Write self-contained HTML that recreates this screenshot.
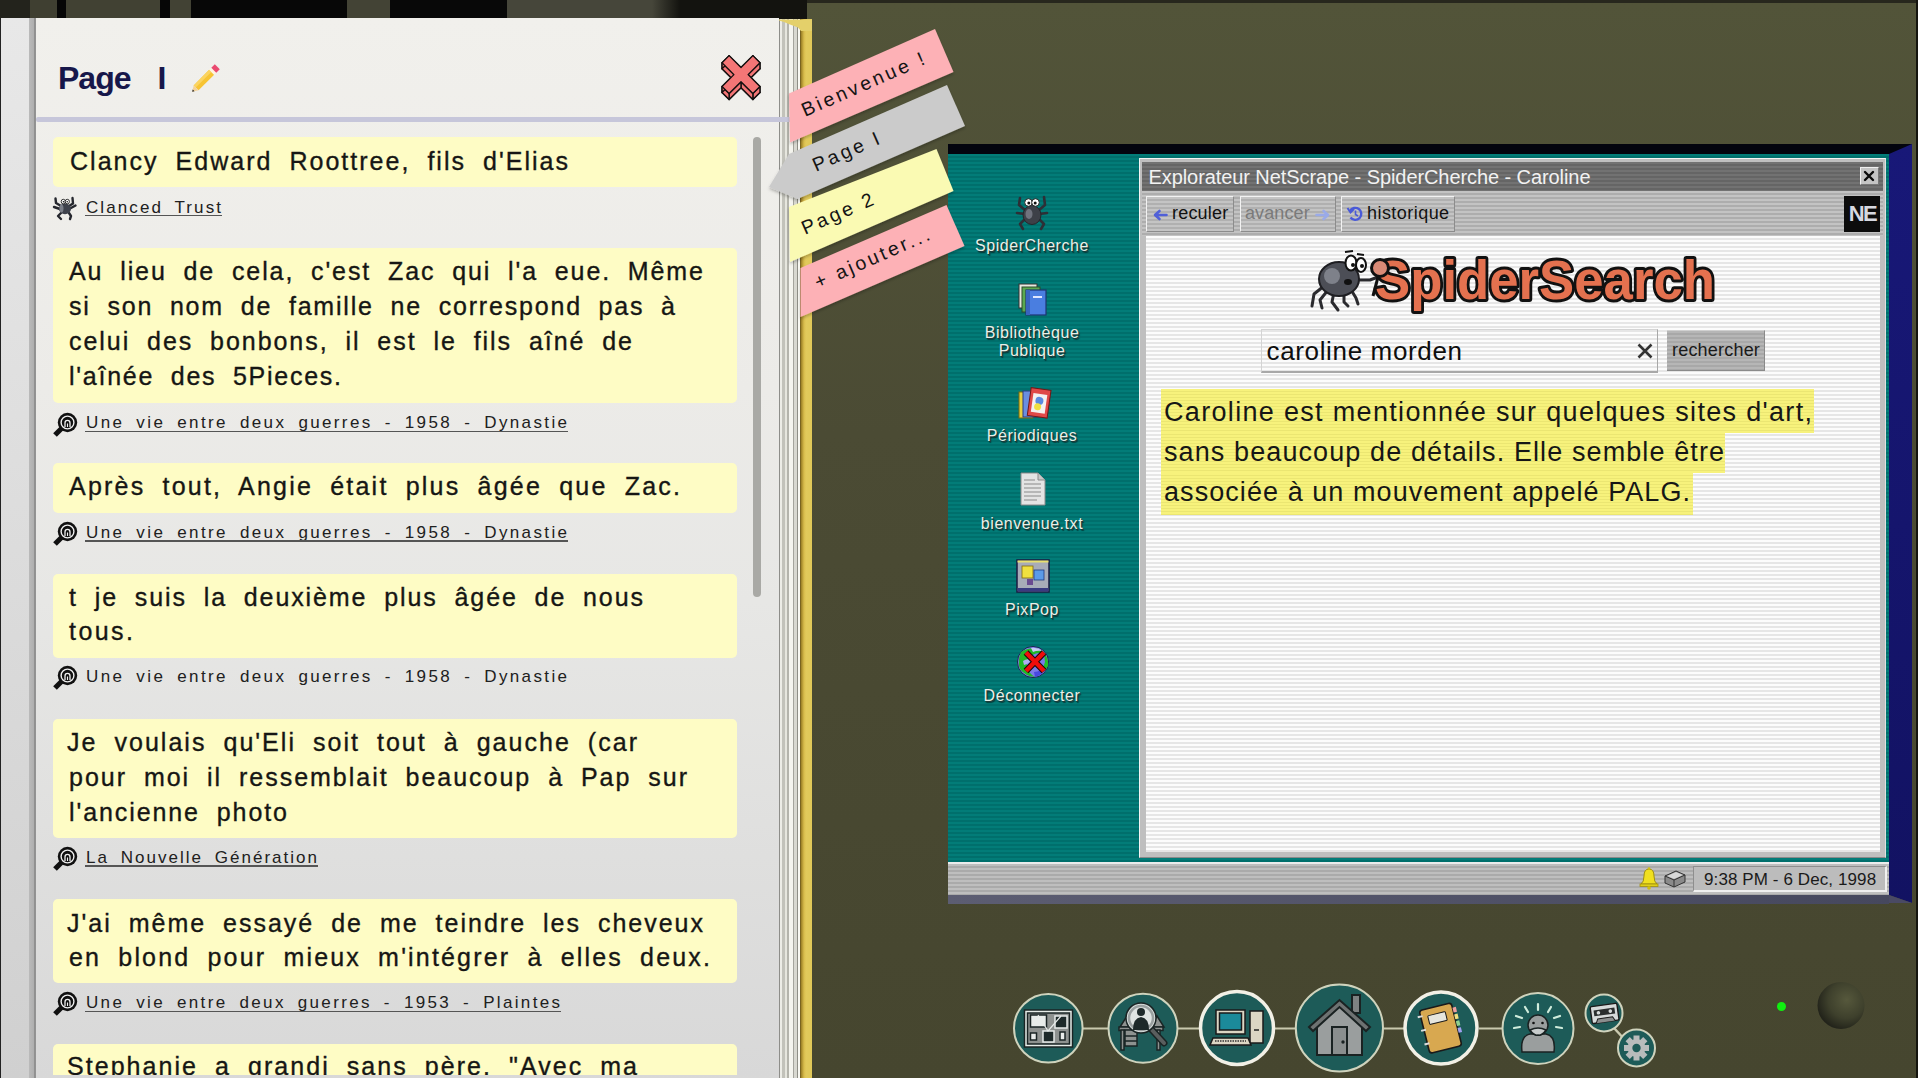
<!DOCTYPE html>
<html><head><meta charset="utf-8"><style>
*{margin:0;padding:0;box-sizing:border-box}
html,body{width:1918px;height:1078px;overflow:hidden}
body{position:relative;background:#4b4b34;font-family:"Liberation Sans",sans-serif}
.abs{position:absolute}
.nw{white-space:pre}
#topband{left:0;top:0;width:807px;height:19px;background:linear-gradient(90deg,#23231c 0 30px,#3f3f31 30px 57px,#060606 57px 66px,#414133 66px 160px,#060606 160px 170px,#424234 170px 191px,#070707 191px 347px,#434335 347px 390px,#080808 390px 507px,#46463a 507px 652px,#2c2c24 666px,#13130f 680px 807px)}
#topright{left:807px;top:0;width:1111px;height:3px;background:#27271d}
#rightedge{left:1916px;top:0;width:2px;height:1078px;background:#15150f}
#bgshade{left:807px;top:3px;width:1109px;height:1075px;background:linear-gradient(#525439,#4b4b34 40%,#46462f)}
#lstrip{left:0;top:18px;width:36px;height:1060px;background:linear-gradient(#e8e8e8,#d0d0d0)}
#lstrip:before{content:"";position:absolute;left:0;top:0;width:1px;height:100%;background:#222}
#lstrip:after{content:"";position:absolute;left:29px;top:0;width:7px;height:100%;background:linear-gradient(90deg,#bababa 0,#b0b0b0 4.5px,#8f8f8f 5px,#949494 7px)}
#page{left:36px;top:18px;width:743px;height:1060px;background:linear-gradient(#f1f0ec 0%,#ecebe8 35%,#e7e7e5 55%,#d8d8d8 100%)}
#edges{left:779px;top:19px;width:22px;height:1059px;background:linear-gradient(90deg,#8e8e8a 0,#8e8e8a 1px,#ececE6 1px,#ececE6 3px,#c2c2ba 3px,#c2c2ba 6px,#e6e6de 6px,#e6e6de 8px,#b4b4ac 8px,#b4b4ac 10px,#f4f4ee 10px,#f4f4ee 14px,#a4a49c 14px,#a4a49c 15.5px,#d8d8d0 15.5px,#d8d8d0 18px,#8e8e86 18px,#8e8e86 19px,#f8f8f2 19px,#f8f8f2 21px,#7a6420 21px)}
#spine{left:801px;top:19px;width:11px;height:1059px;background:linear-gradient(90deg,#9a7e24,#d8bc4c 3px,#e2ca5c 5px,#e0c858 100%)}
#ptitle{font-size:32px;line-height:32px;font-weight:bold;color:#17174a;letter-spacing:-0.99px}
.card{left:53px;width:684px;background:#fefcc5;border-radius:5px}
#clip{left:0;top:0;width:1918px;height:1075px;overflow:hidden}
</style></head><body>
<div id="bgshade" class="abs"></div>
<div id="topband" class="abs"></div>
<div id="topright" class="abs"></div>
<div id="rightedge" class="abs"></div>
<div id="lstrip" class="abs"></div>
<div id="page" class="abs"></div>
<div id="edges" class="abs"></div>
<div id="spine" class="abs"></div>
<svg class="abs" style="left:778px;top:18px" width="36" height="14" viewBox="778 18 36 14"><polygon points="779,19.5 812,19.5 812,31 801,31 798,27.5 790,24.5 784,22 779,20.5" fill="#e4d06a"/></svg>
<div id="clip" class="abs">
<div class="abs nw" id="ptitle" style="left:58px;top:62px;">Page <span style="margin-left:19px">I</span></div>
<svg class="abs" style="left:186px;top:58px" width="40" height="40" viewBox="0 0 40 40">
<g transform="rotate(-45 20 20)">
<rect x="6" y="16.5" width="22" height="7" fill="#f7c433"/>
<rect x="6" y="16.5" width="22" height="3" fill="#fbd460"/>
<rect x="28" y="16.5" width="3" height="7" fill="#fff3e0"/>
<rect x="31" y="16.5" width="5" height="7" fill="#ea4a70"/>
<path d="M6 16.5 L0.5 20 L6 23.5 Z" fill="#f3d29a"/>
<path d="M2.5 18.7 L0.5 20 L2.5 21.3 Z" fill="#222"/>
</g></svg>
<svg class="abs" style="left:700px;top:40px" width="80" height="80" viewBox="700 40 80 80"><g stroke="#141010" stroke-width="1.4" stroke-linejoin="round" fill="#f47676"><polygon points="741.00,73.53 752.88,61.65 759.95,68.72 748.07,80.60 759.95,92.48 752.88,99.55 741.00,87.67 729.12,99.55 722.05,92.48 733.93,80.60 722.05,68.72 729.12,61.65"/><polygon points="741.00,67.53 752.88,55.65 752.88,61.65 741.00,73.53"/><polygon points="752.88,55.65 759.95,62.72 759.95,68.72 752.88,61.65"/><polygon points="759.95,62.72 748.07,74.60 748.07,80.60 759.95,68.72"/><polygon points="748.07,74.60 759.95,86.48 759.95,92.48 748.07,80.60"/><polygon points="759.95,86.48 752.88,93.55 752.88,99.55 759.95,92.48"/><polygon points="752.88,93.55 741.00,81.67 741.00,87.67 752.88,99.55"/><polygon points="741.00,81.67 729.12,93.55 729.12,99.55 741.00,87.67"/><polygon points="729.12,93.55 722.05,86.48 722.05,92.48 729.12,99.55"/><polygon points="722.05,86.48 733.93,74.60 733.93,80.60 722.05,92.48"/><polygon points="733.93,74.60 722.05,62.72 722.05,68.72 733.93,80.60"/><polygon points="722.05,62.72 729.12,55.65 729.12,61.65 722.05,68.72"/><polygon points="729.12,55.65 741.00,67.53 741.00,73.53 729.12,61.65"/><polygon points="741.00,67.53 752.88,55.65 759.95,62.72 748.07,74.60 759.95,86.48 752.88,93.55 741.00,81.67 729.12,93.55 722.05,86.48 733.93,74.60 722.05,62.72 729.12,55.65" stroke-width="1.3"/></g></svg>
<div class="abs" style="left:36px;top:117px;width:765px;height:5px;background:#c6c6da;border-radius:2px"></div>
<div class="abs card" style="top:137px;height:50px"></div>
<div class="abs nw" style="left:70.0px;top:149.2px;font-size:25px;line-height:25px;letter-spacing:2.022px;word-spacing:8px;color:#161614;-webkit-text-stroke:0.35px #161614">Clancy Edward Roottree, fils d'Elias</div>
<div class="abs card" style="top:247.5px;height:155.5px"></div>
<div class="abs nw" style="left:69.0px;top:258.8px;font-size:25px;line-height:25px;letter-spacing:1.892px;word-spacing:8px;color:#161614;-webkit-text-stroke:0.35px #161614">Au lieu de cela, c'est Zac qui l'a eue. Même</div>
<div class="abs nw" style="left:69.0px;top:294.3px;font-size:25px;line-height:25px;letter-spacing:1.807px;word-spacing:8px;color:#161614;-webkit-text-stroke:0.35px #161614">si son nom de famille ne correspond pas à</div>
<div class="abs nw" style="left:69.0px;top:328.8px;font-size:25px;line-height:25px;letter-spacing:1.948px;word-spacing:8px;color:#161614;-webkit-text-stroke:0.35px #161614">celui des bonbons, il est le fils aîné de</div>
<div class="abs nw" style="left:69.0px;top:363.8px;font-size:25px;line-height:25px;letter-spacing:1.738px;word-spacing:8px;color:#161614;-webkit-text-stroke:0.35px #161614">l'aînée des 5Pieces.</div>
<div class="abs card" style="top:463px;height:49.5px"></div>
<div class="abs nw" style="left:69.0px;top:474.4px;font-size:25px;line-height:25px;letter-spacing:2.215px;word-spacing:8px;color:#161614;-webkit-text-stroke:0.35px #161614">Après tout, Angie était plus âgée que Zac.</div>
<div class="abs card" style="top:573.5px;height:84.0px"></div>
<div class="abs nw" style="left:69.0px;top:584.8px;font-size:25px;line-height:25px;letter-spacing:1.900px;word-spacing:8px;color:#161614;-webkit-text-stroke:0.35px #161614">t je suis la deuxième plus âgée de nous</div>
<div class="abs nw" style="left:69.0px;top:619.3px;font-size:25px;line-height:25px;letter-spacing:2.449px;word-spacing:8px;color:#161614;-webkit-text-stroke:0.35px #161614">tous.</div>
<div class="abs card" style="top:718.5px;height:119.0px"></div>
<div class="abs nw" style="left:67.0px;top:730.2px;font-size:25px;line-height:25px;letter-spacing:2.030px;word-spacing:8px;color:#161614;-webkit-text-stroke:0.35px #161614">Je voulais qu'Eli soit tout à gauche (car</div>
<div class="abs nw" style="left:69.0px;top:764.8px;font-size:25px;line-height:25px;letter-spacing:1.980px;word-spacing:8px;color:#161614;-webkit-text-stroke:0.35px #161614">pour moi il ressemblait beaucoup à Pap sur</div>
<div class="abs nw" style="left:69.0px;top:799.8px;font-size:25px;line-height:25px;letter-spacing:1.913px;word-spacing:8px;color:#161614;-webkit-text-stroke:0.35px #161614">l'ancienne photo</div>
<div class="abs card" style="top:898.5px;height:84.5px"></div>
<div class="abs nw" style="left:67.0px;top:910.8px;font-size:25px;line-height:25px;letter-spacing:1.998px;word-spacing:8px;color:#161614;-webkit-text-stroke:0.35px #161614">J'ai même essayé de me teindre les cheveux</div>
<div class="abs nw" style="left:69.0px;top:945.3px;font-size:25px;line-height:25px;letter-spacing:2.182px;word-spacing:8px;color:#161614;-webkit-text-stroke:0.35px #161614">en blond pour mieux m'intégrer à elles deux.</div>
<div class="abs card" style="top:1044px;height:56px"></div>
<div class="abs nw" style="left:67.0px;top:1053.8px;font-size:25px;line-height:25px;letter-spacing:2.049px;word-spacing:8px;color:#161614;-webkit-text-stroke:0.35px #161614">Stephanie a grandi sans père. "Avec ma</div>
<svg class="abs" style="left:52px;top:196px" width="26" height="26" viewBox="0 0 26 26">
<g stroke="#25272e" stroke-width="2.4" fill="none" stroke-linecap="round" stroke-linejoin="round">
<path d="M9 10 L4 7 L3.5 2.5"/><path d="M17 10 L21 7.5 L20.5 2"/>
<path d="M8 13 L2 11"/><path d="M18 12.5 L23.5 9.5"/>
<path d="M9 17 L6 20 L9 23"/><path d="M17 17 L19 20 L18 23"/>
</g>
<ellipse cx="13" cy="12.8" rx="6" ry="5.4" fill="#3e424c"/>
<ellipse cx="9.5" cy="12.5" rx="2" ry="4" fill="#7a7e88"/>
<ellipse cx="11.3" cy="5.6" rx="2.1" ry="2.3" fill="#fff" stroke="#1a1a1a" stroke-width="0.9"/>
<ellipse cx="15.3" cy="5.6" rx="2.1" ry="2.3" fill="#fff" stroke="#1a1a1a" stroke-width="0.9"/>
<circle cx="11.5" cy="5.8" r="0.8" fill="#111"/><circle cx="15.2" cy="5.8" r="0.8" fill="#111"/>
</svg>
<div class="abs nw" style="left:86.0px;top:198.6px;font-size:17px;line-height:17px;letter-spacing:2.092px;word-spacing:5px;color:#202020">Clanced Trust</div>
<div class="abs" style="left:85px;top:214.8px;width:137px;height:1.3px;background:#555"></div>
<svg class="abs" style="left:52px;top:410.5px" width="28" height="28" viewBox="0 0 28 28">
<path d="M10 17 L3 24" stroke="#111" stroke-width="5.2" stroke-linecap="butt"/>
<circle cx="15.5" cy="11.5" r="9.7" fill="#111"/>
<circle cx="15.5" cy="11.5" r="6.4" fill="none" stroke="#f0f0f0" stroke-width="1.4"/>
<path d="M13 16 V12 A2.5 2.6 0 0 1 18 12 V16" fill="none" stroke="#f0f0f0" stroke-width="1.3"/>
<path d="M15.5 16 V12.5" stroke="#f0f0f0" stroke-width="1.1"/>
</svg>
<div class="abs nw" style="left:86.0px;top:414.4px;font-size:17px;line-height:17px;letter-spacing:2.366px;word-spacing:5px;color:#202020">Une vie entre deux guerres - 1958 - Dynastie</div>
<div class="abs" style="left:85px;top:430.8px;width:483px;height:1.3px;background:#555"></div>
<svg class="abs" style="left:52px;top:519.7px" width="28" height="28" viewBox="0 0 28 28">
<path d="M10 17 L3 24" stroke="#111" stroke-width="5.2" stroke-linecap="butt"/>
<circle cx="15.5" cy="11.5" r="9.7" fill="#111"/>
<circle cx="15.5" cy="11.5" r="6.4" fill="none" stroke="#f0f0f0" stroke-width="1.4"/>
<path d="M13 16 V12 A2.5 2.6 0 0 1 18 12 V16" fill="none" stroke="#f0f0f0" stroke-width="1.3"/>
<path d="M15.5 16 V12.5" stroke="#f0f0f0" stroke-width="1.1"/>
</svg>
<div class="abs nw" style="left:86.0px;top:523.6px;font-size:17px;line-height:17px;letter-spacing:2.366px;word-spacing:5px;color:#202020">Une vie entre deux guerres - 1958 - Dynastie</div>
<div class="abs" style="left:85px;top:540.3px;width:483px;height:1.3px;background:#555"></div>
<svg class="abs" style="left:52px;top:663.7px" width="28" height="28" viewBox="0 0 28 28">
<path d="M10 17 L3 24" stroke="#111" stroke-width="5.2" stroke-linecap="butt"/>
<circle cx="15.5" cy="11.5" r="9.7" fill="#111"/>
<circle cx="15.5" cy="11.5" r="6.4" fill="none" stroke="#f0f0f0" stroke-width="1.4"/>
<path d="M13 16 V12 A2.5 2.6 0 0 1 18 12 V16" fill="none" stroke="#f0f0f0" stroke-width="1.3"/>
<path d="M15.5 16 V12.5" stroke="#f0f0f0" stroke-width="1.1"/>
</svg>
<div class="abs nw" style="left:86.0px;top:667.6px;font-size:17px;line-height:17px;letter-spacing:2.366px;word-spacing:5px;color:#202020">Une vie entre deux guerres - 1958 - Dynastie</div>
<svg class="abs" style="left:52px;top:844.7px" width="28" height="28" viewBox="0 0 28 28">
<path d="M10 17 L3 24" stroke="#111" stroke-width="5.2" stroke-linecap="butt"/>
<circle cx="15.5" cy="11.5" r="9.7" fill="#111"/>
<circle cx="15.5" cy="11.5" r="6.4" fill="none" stroke="#f0f0f0" stroke-width="1.4"/>
<path d="M13 16 V12 A2.5 2.6 0 0 1 18 12 V16" fill="none" stroke="#f0f0f0" stroke-width="1.3"/>
<path d="M15.5 16 V12.5" stroke="#f0f0f0" stroke-width="1.1"/>
</svg>
<div class="abs nw" style="left:86.0px;top:848.6px;font-size:17px;line-height:17px;letter-spacing:2.018px;word-spacing:5px;color:#202020">La Nouvelle Génération</div>
<div class="abs" style="left:85px;top:865.3px;width:233px;height:1.3px;background:#555"></div>
<svg class="abs" style="left:52px;top:990.2px" width="28" height="28" viewBox="0 0 28 28">
<path d="M10 17 L3 24" stroke="#111" stroke-width="5.2" stroke-linecap="butt"/>
<circle cx="15.5" cy="11.5" r="9.7" fill="#111"/>
<circle cx="15.5" cy="11.5" r="6.4" fill="none" stroke="#f0f0f0" stroke-width="1.4"/>
<path d="M13 16 V12 A2.5 2.6 0 0 1 18 12 V16" fill="none" stroke="#f0f0f0" stroke-width="1.3"/>
<path d="M15.5 16 V12.5" stroke="#f0f0f0" stroke-width="1.1"/>
</svg>
<div class="abs nw" style="left:86.0px;top:994.1px;font-size:17px;line-height:17px;letter-spacing:2.335px;word-spacing:5px;color:#202020">Une vie entre deux guerres - 1953 - Plaintes</div>
<div class="abs" style="left:85px;top:1010.8px;width:476px;height:1.3px;background:#555"></div>
<div class="abs" style="left:752.5px;top:137px;width:8.5px;height:460px;border-radius:5px;background:#a9a9a5"></div>
</div>
<div class="abs" style="left:948px;top:144px;width:964px;height:10px;background:#03040e"></div>
<div class="abs" style="left:948px;top:154px;width:941px;height:708px;background:repeating-linear-gradient(180deg,#027c78 0px,#027c78 2.5px,#006f6c 2.5px,#006f6c 4px)"></div>
<svg class="abs" style="left:1885px;top:140px" width="30" height="770" viewBox="1885 140 30 770">
<defs><linearGradient id="bl" x1="0" y1="0" x2="0" y2="1"><stop offset="0" stop-color="#181878"/><stop offset="1" stop-color="#121262"/></linearGradient></defs>
<polygon points="1889,154 1912,144 1912,903 1889,895" fill="url(#bl)"/>
<polygon points="1889,895 1912,903 1889,903" fill="#4a4a64"/>
</svg>
<div class="abs" style="left:948px;top:862px;width:941px;height:33px;background:repeating-linear-gradient(180deg,#bebebe 0,#bebebe 2.5px,#aaaaaa 2.5px,#aaaaaa 4px);border-top:2.5px solid #ececec"></div>
<div class="abs" style="left:948px;top:895px;width:941px;height:8.5px;background:linear-gradient(90deg,#5c5d72,#46485e)"></div>
<div class="abs" style="left:1693px;top:866px;width:194px;height:26px;border-top:1.5px solid #8e8e8e;border-left:1.5px solid #8e8e8e;border-bottom:2px solid #f0f0f0;border-right:2px solid #f0f0f0;background:#bcbcbc"></div>
<div class="abs nw" style="left:1704.0px;top:870.6px;font-size:17px;line-height:17px;color:#1a1a1a;letter-spacing:0.1px">9:38 PM - 6 Dec, 1998</div>
<svg class="abs" style="left:1638px;top:866px" width="50" height="24" viewBox="0 0 50 24">
<path d="M3 18 Q6 16 6 10 Q6 3 11 3 Q16 3 16 10 Q16 16 19 18 Z" fill="#f0e020" stroke="#a09010" stroke-width="1"/>
<rect x="2" y="18" width="18" height="2.5" fill="#e0d018" stroke="#a09010" stroke-width="0.8"/>
<circle cx="11" cy="22" r="1.8" fill="#d0c010"/><circle cx="11" cy="2.5" r="1.3" fill="#d0c010"/>
<path d="M27 10 L38 5 L47 9 L47 16 L36 21 L27 17 Z" fill="#8a8a8a" stroke="#333" stroke-width="1"/>
<path d="M27 10 L36 14 L47 9" fill="none" stroke="#333" stroke-width="1"/>
<path d="M36 14 V21" stroke="#333" stroke-width="1"/>
<path d="M29 10 L38 6 L45 9 L36 13 Z" fill="#d8d8d8"/>
</svg>
<svg class="abs" style="left:1014px;top:193px" width="36" height="38" viewBox="0 0 36 38">
<g stroke="#2d2f36" stroke-width="2.6" fill="none" stroke-linecap="round" stroke-linejoin="round">
<path d="M11 17 L5 12 L6 5"/><path d="M25 17 L31 12 L30 4"/>
<path d="M11 21 L3 20"/><path d="M25 21 L33 20"/>
<path d="M12 25 L6 31 L9 36"/><path d="M24 25 L30 31 L27 36"/>
</g>
<ellipse cx="18" cy="22" rx="9" ry="9.5" fill="#3d4048" stroke="#25262b" stroke-width="1"/>
<ellipse cx="15" cy="21" rx="3.5" ry="5" fill="#70737e"/>
<circle cx="14.5" cy="9.5" r="3.8" fill="#fff" stroke="#222" stroke-width="1"/>
<circle cx="21.5" cy="9.5" r="3.8" fill="#fff" stroke="#222" stroke-width="1"/>
<circle cx="14.8" cy="10" r="1.5" fill="#111"/><circle cx="21.2" cy="10" r="1.5" fill="#111"/>
</svg>
<div class="abs nw" style="left:932.0px;width:200px;text-align:center;top:237.5px;font-size:16px;line-height:16px;color:#e8f0ea;letter-spacing:0.55px;text-shadow:1px 1px 0 #1f3a38,1.5px 1.5px 1px rgba(0,0,0,.5);">SpiderCherche</div>
<svg class="abs" style="left:1016px;top:281px" width="34" height="36" viewBox="0 0 34 36">
<rect x="3" y="3" width="18" height="24" fill="#e8e8e0" stroke="#333" stroke-width="1"/>
<rect x="6" y="6" width="18" height="25" fill="#5aa850" stroke="#2a4a28" stroke-width="1"/>
<rect x="10" y="9" width="20" height="25" fill="#4a7ee0" stroke="#1e3470" stroke-width="1.2"/>
<rect x="10" y="9" width="4" height="25" fill="#3a64c0"/>
<rect x="17" y="15" width="9" height="2" fill="#dfe8ff"/>
</svg>
<div class="abs nw" style="left:932.0px;width:200px;text-align:center;top:324.5px;font-size:16px;line-height:16px;color:#e8f0ea;letter-spacing:0.55px;text-shadow:1px 1px 0 #1f3a38,1.5px 1.5px 1px rgba(0,0,0,.5);">Bibliothèque</div>
<div class="abs nw" style="left:932.0px;width:200px;text-align:center;top:342.8px;font-size:16px;line-height:16px;color:#e8f0ea;letter-spacing:0.55px;text-shadow:1px 1px 0 #1f3a38,1.5px 1.5px 1px rgba(0,0,0,.5);">Publique</div>
<svg class="abs" style="left:1016px;top:386px" width="36" height="36" viewBox="0 0 36 36">
<rect x="3" y="6" width="14" height="26" fill="#e8d040" stroke="#7a6a10" stroke-width="1"/>
<rect x="7" y="5" width="14" height="26" fill="#6a8ee0" stroke="#2a3a80" stroke-width="1"/>
<g transform="rotate(8 24 18)"><rect x="13" y="3" width="20" height="28" fill="#e04848" stroke="#701818" stroke-width="1"/>
<rect x="16" y="8" width="14" height="19" fill="#f4f0f0"/>
<circle cx="23" cy="15" r="4" fill="#5a8ae0"/><circle cx="22" cy="21" r="3.5" fill="#f0e040"/></g>
</svg>
<div class="abs nw" style="left:932.0px;width:200px;text-align:center;top:428.3px;font-size:16px;line-height:16px;color:#e8f0ea;letter-spacing:0.55px;text-shadow:1px 1px 0 #1f3a38,1.5px 1.5px 1px rgba(0,0,0,.5);">Périodiques</div>
<svg class="abs" style="left:1019px;top:472px" width="28" height="34" viewBox="0 0 28 34">
<path d="M2 1 H19 L26 8 V33 H2 Z" fill="#e4e4e4" stroke="#8a8a8a" stroke-width="1"/>
<path d="M19 1 V8 H26" fill="#c8c8c8" stroke="#8a8a8a" stroke-width="1"/>
<g stroke="#9a9a9a" stroke-width="1.2"><path d="M5 8 H16"/><path d="M5 12 H22"/><path d="M5 16 H22"/><path d="M5 20 H22"/><path d="M5 24 H22"/><path d="M5 28 H18"/></g>
</svg>
<div class="abs nw" style="left:932.0px;width:200px;text-align:center;top:516.0px;font-size:16px;line-height:16px;color:#e8f0ea;letter-spacing:0.55px;text-shadow:1px 1px 0 #1f3a38,1.5px 1.5px 1px rgba(0,0,0,.5);">bienvenue.txt</div>
<svg class="abs" style="left:1016px;top:559px" width="34" height="34" viewBox="0 0 34 34">
<rect x="1" y="1" width="32" height="32" fill="#a8acb8" stroke="#1a1a40" stroke-width="1.5"/>
<rect x="1.5" y="1.5" width="31" height="2" fill="#e8e070"/>
<rect x="1.5" y="29" width="31" height="3.5" fill="#3a3a80"/>
<rect x="6" y="7" width="11" height="12" fill="#f0e040" stroke="#806a10" stroke-width="0.8"/>
<rect x="18" y="11" width="10" height="10" fill="#5a9ae8" stroke="#1e3a80" stroke-width="0.8"/>
<rect x="11" y="20" width="6" height="6" fill="#6a4a90"/>
</svg>
<div class="abs nw" style="left:932.0px;width:200px;text-align:center;top:602.1px;font-size:16px;line-height:16px;color:#e8f0ea;letter-spacing:0.55px;text-shadow:1px 1px 0 #1f3a38,1.5px 1.5px 1px rgba(0,0,0,.5);">PixPop</div>
<svg class="abs" style="left:1015px;top:644px" width="36" height="36" viewBox="0 0 36 36">
<circle cx="18" cy="18" r="15.6" fill="#7a7ae8" stroke="#1a2a50" stroke-width="1"/>
<path d="M6 8 Q12 4 20 4 Q26 5 30 9 Q22 8 16 12 Q10 16 12 22 Q14 30 20 33 Q10 32 5 25 Q2 18 6 8 Z" fill="#22b828"/>
<path d="M30 10 Q34 16 33 22 Q31 26 28 28 Q28 22 30 18 Q29 14 30 10 Z" fill="#20c028"/>
<path d="M16 4 Q22 3 28 7 Q22 6 18 8 Z" fill="#c8c8f8"/>
<path d="M8 17 Q12 14 16 16 Q14 20 9 21 Z" fill="#b0b0f0"/>
<path d="M19 28 Q26 27 30 24 Q28 31 20 33 Z" fill="#4848e0"/>
<g stroke-linecap="butt"><path d="M11 8.5 L29 27 M29 8.5 L11 27" stroke="#1a0a0a" stroke-width="6.5"/>
<path d="M11 8.5 L29 27 M29 8.5 L11 27" stroke="#f00c0c" stroke-width="4.4"/></g>
</svg>
<div class="abs nw" style="left:932.0px;width:200px;text-align:center;top:687.7px;font-size:16px;line-height:16px;color:#e8f0ea;letter-spacing:0.55px;text-shadow:1px 1px 0 #1f3a38,1.5px 1.5px 1px rgba(0,0,0,.5);">Déconnecter</div>
<div class="abs" style="left:1139px;top:158px;width:747px;height:700px;background:#bfbfbf;border-top:1.5px solid #f4f4f4;border-left:1.5px solid #f4f4f4;border-right:1.5px solid #e0e0e0;border-bottom:1px solid #8a8a8a"></div>
<div class="abs" style="left:1142px;top:162px;width:741px;height:29px;background:repeating-linear-gradient(180deg,#727272 0,#727272 2.5px,#656565 2.5px,#656565 4px)"></div>
<div class="abs nw" style="left:1148.5px;top:167.4px;font-size:20px;line-height:20px;color:#f2f2f2;letter-spacing:-0.08px">Explorateur NetScrape - SpiderCherche - Caroline</div>
<div class="abs" style="left:1860px;top:167px;width:18.5px;height:18px;background:#c4c4c4;border-top:1px solid #f0f0f0;border-left:1px solid #f0f0f0;border-bottom:1px solid #777;border-right:1px solid #777"></div>
<svg class="abs" style="left:1860px;top:167px" width="18" height="18" viewBox="0 0 18 18"><path d="M5 5 L13 13 M13 5 L5 13" stroke="#0a0a0a" stroke-width="2.4" stroke-linecap="round"/></svg>
<div class="abs" style="left:1142px;top:191px;width:741px;height:45px;background:repeating-linear-gradient(180deg,#c3c3c3 0,#c3c3c3 2.5px,#adadad 2.5px,#adadad 4px)"></div>
<div class="abs" style="left:1146px;top:196px;width:88px;height:35.5px;background:repeating-linear-gradient(180deg,#c4c4c4 0,#c4c4c4 2.5px,#b0b0b0 2.5px,#b0b0b0 4px);border-top:1.5px solid #f2f2f2;border-left:1.5px solid #f2f2f2;border-bottom:1.5px solid #8c8c8c;border-right:1.5px solid #8c8c8c;"></div>
<div class="abs" style="left:1240px;top:196px;width:95.5px;height:35.5px;background:repeating-linear-gradient(180deg,#c4c4c4 0,#c4c4c4 2.5px,#b0b0b0 2.5px,#b0b0b0 4px);border-top:1.5px solid #f2f2f2;border-left:1.5px solid #f2f2f2;border-bottom:1.5px solid #8c8c8c;border-right:1.5px solid #8c8c8c;"></div>
<div class="abs" style="left:1341px;top:196px;width:113.5px;height:35.5px;background:repeating-linear-gradient(180deg,#c4c4c4 0,#c4c4c4 2.5px,#b0b0b0 2.5px,#b0b0b0 4px);border-top:1.5px solid #f2f2f2;border-left:1.5px solid #f2f2f2;border-bottom:1.5px solid #8c8c8c;border-right:1.5px solid #8c8c8c;"></div>
<svg class="abs" style="left:1153px;top:208px" width="16" height="14" viewBox="0 0 16 14"><path d="M13.5 7 H4 M6.5 3 L2 7 L6.5 11" stroke="#5060d8" stroke-width="2.6" fill="none" stroke-linecap="round" stroke-linejoin="round"/></svg>
<div class="abs nw" style="left:1172.0px;top:204.4px;font-size:18px;line-height:18px;color:#111;letter-spacing:0.2px">reculer</div>
<div class="abs nw" style="left:1245.0px;top:204.4px;font-size:18px;line-height:18px;color:#7a7a7a;letter-spacing:0.1px">avancer</div>
<svg class="abs" style="left:1314px;top:208px" width="16" height="14" viewBox="0 0 16 14"><path d="M2.5 7 H12 M9.5 3 L14 7 L9.5 11" stroke="#9aaae8" stroke-width="2.6" fill="none" stroke-linecap="round" stroke-linejoin="round"/></svg>
<svg class="abs" style="left:1346px;top:205px" width="18" height="18" viewBox="0 0 18 18"><path d="M4 6 A6 6 0 1 1 4.5 12.5" stroke="#4a5ad8" stroke-width="2.4" fill="none"/><path d="M1.5 3 L4.5 7.5 L8 4" fill="none" stroke="#4a5ad8" stroke-width="2"/><path d="M9.5 5.5 V9.5 L12 11" stroke="#4a5ad8" stroke-width="1.6" fill="none"/></svg>
<div class="abs nw" style="left:1367.0px;top:204.4px;font-size:18px;line-height:18px;color:#111;letter-spacing:0.45px">historique</div>
<div class="abs" style="left:1844px;top:196px;width:36px;height:36px;background:#0c0c0c"></div>
<div class="abs nw" style="left:1845px;top:203px;width:35px;font-size:22px;line-height:22px;font-weight:bold;color:#d6d8e0;letter-spacing:-1.5px;text-align:center">NE</div>
<div class="abs" style="left:1146px;top:236px;width:734px;height:616px;background:repeating-linear-gradient(180deg,#fcfcfc 0,#fcfcfc 2.5px,#e6e6e6 2.5px,#e6e6e6 4px)"></div>
<svg class="abs" style="left:1370px;top:250px" width="352" height="64" viewBox="0 0 352 64">
<text x="5" y="49" font-family="Liberation Sans" font-weight="bold" font-size="56" textLength="340" lengthAdjust="spacingAndGlyphs" fill="#e4714f" stroke="#111" stroke-width="6" stroke-linejoin="round" paint-order="stroke">SpiderSearch</text>
</svg>
<svg class="abs" style="left:1300px;top:244px" width="100" height="72" viewBox="0 0 100 72">
<g stroke="#2a2a2e" stroke-width="3" fill="none" stroke-linecap="round" stroke-linejoin="round">
<path d="M24 42 L14 50 L12 62"/><path d="M28 46 L20 56 L22 64"/><path d="M34 48 L32 58 L38 66"/>
<path d="M44 48 L44 58 L48 62"/><path d="M50 44 L56 54 L58 60"/>
<path d="M58 36 L70 36 L78 33"/>
</g>
<ellipse cx="39" cy="35" rx="20" ry="17" fill="#4c4e56" stroke="#1e1e22" stroke-width="2"/>
<ellipse cx="32" cy="32" rx="8" ry="8" fill="#7e818a"/>
<ellipse cx="51" cy="19" rx="5.5" ry="7.5" fill="#fff" stroke="#111" stroke-width="2"/>
<ellipse cx="61" cy="21" rx="5" ry="7" fill="#fff" stroke="#111" stroke-width="2"/>
<circle cx="53" cy="21" r="2" fill="#111"/><circle cx="62" cy="22" r="2" fill="#111"/>
<path d="M45 8 L53 7 M57 10 L64 11" stroke="#111" stroke-width="2"/>
<ellipse cx="48" cy="38" rx="4" ry="3" fill="#111"/>
<path d="M78 33 L73 52" stroke="#111" stroke-width="3"/>
<circle cx="80" cy="24" r="8.5" fill="#d98a76" stroke="#111" stroke-width="3"/>
</svg>
<div class="abs" style="left:1261px;top:328.5px;width:397px;height:44px;border-top:1px solid #d4d4d4;border-left:1px solid #d4d4d4;border-right:1.5px solid #a8a8a8;border-bottom:2px solid #a8a8a8"></div>
<div class="abs nw" style="left:1266.5px;top:337.6px;font-size:26px;line-height:26px;color:#0e0e0e;letter-spacing:0.65px">caroline morden</div>
<svg class="abs" style="left:1636px;top:342px" width="18" height="18" viewBox="0 0 18 18"><path d="M2.5 2.5 L15.5 15.5 M15.5 2.5 L2.5 15.5" stroke="#333" stroke-width="2.6"/></svg>
<div class="abs" style="left:1667px;top:330px;width:98px;height:41px;background:repeating-linear-gradient(180deg,#b6b6b6 0,#b6b6b6 2px,#a8a8a8 2px,#a8a8a8 4px);border-bottom:1.5px solid #8a8a8a;border-right:1px solid #8a8a8a;border-top:1px solid #d0d0d0"></div>
<div class="abs nw" style="left:1672.0px;top:341.3px;font-size:18px;line-height:18px;color:#1a1a1a;letter-spacing:0.2px">rechercher</div>
<div class="abs" style="left:1161px;top:389px;width:653px;height:43.5px;background:repeating-linear-gradient(180deg,#f7f27c 0,#f7f27c 2px,#ebe672 2px,#ebe672 3px)"></div>
<div class="abs" style="left:1161px;top:432px;width:564px;height:41px;background:repeating-linear-gradient(180deg,#f7f27c 0,#f7f27c 2px,#ebe672 2px,#ebe672 3px)"></div>
<div class="abs" style="left:1161px;top:473px;width:532px;height:41.5px;background:repeating-linear-gradient(180deg,#f7f27c 0,#f7f27c 2px,#ebe672 2px,#ebe672 3px)"></div>
<div class="abs nw" style="left:1164.0px;top:399.3px;font-size:27px;line-height:27px;color:#161616;letter-spacing:1.323px">Caroline est mentionnée sur quelques sites d'art,</div>
<div class="abs nw" style="left:1164.0px;top:439.1px;font-size:27px;line-height:27px;color:#161616;letter-spacing:1.102px">sans beaucoup de détails. Elle semble être</div>
<div class="abs nw" style="left:1164.0px;top:479.1px;font-size:27px;line-height:27px;color:#161616;letter-spacing:1.063px">associée à un mouvement appelé PALG.</div>
<svg class="abs" style="left:0;top:0" width="1000" height="340" viewBox="0 0 1000 340">
<defs><filter id="tsh" x="-10%" y="-10%" width="120%" height="130%"><feDropShadow dx="0" dy="2" stdDeviation="1.5" flood-color="#000" flood-opacity="0.25"/></filter></defs>
<g filter="url(#tsh)">
<polygon points="789,93.5 935,29 953.5,72 790,142.5" fill="#fdb1b6"/>
<polygon points="789,154 947,85 965,126 797.5,199 769,187" fill="#cbcbcb"/>
<polygon points="789,207 936.5,149 953.5,191 790,262" fill="#fafab3"/>
<polygon points="800.5,268 946.5,205 964.5,246 800.5,317" fill="#fdb1b6"/>
</g>
<text x="805" y="117" transform="rotate(-23.7 805 117)" font-family="Liberation Sans" font-size="19.5" letter-spacing="2.9" fill="#141414">Bienvenue !</text>
<text x="816" y="172" transform="rotate(-23.7 816 172)" font-family="Liberation Sans" font-size="19.5" letter-spacing="2.9" fill="#141414">Page I</text>
<text x="805" y="235" transform="rotate(-23.7 805 235)" font-family="Liberation Sans" font-size="19.5" letter-spacing="2.9" fill="#141414">Page 2</text>
<text x="818" y="289" transform="rotate(-23.7 818 289)" font-family="Liberation Sans" font-size="19.5" letter-spacing="2.9" fill="#141414">+ ajouter...</text>
</svg>
<svg class="abs" style="left:1000px;top:970px" width="918" height="108" viewBox="1000 970 918 108">
<defs>
<radialGradient id="sph" cx="0.62" cy="0.38" r="0.65"><stop offset="0" stop-color="#56583c"/><stop offset="0.6" stop-color="#3e402c"/><stop offset="1" stop-color="#22231a"/></radialGradient>
</defs>
<path d="M1083 1028.5 H1108 M1178 1028.5 H1199 M1275 1028.5 H1295 M1384 1028.5 H1404 M1479 1028.5 H1502" stroke="#c9c9ae" stroke-width="2"/>
<path d="M1614 1028 L1626 1041" stroke="#c9c9ae" stroke-width="2.5"/>
<circle cx="1048.3" cy="1028.2" r="34.3" fill="#1d5b58" stroke="#cfd3bd" stroke-width="2"/>
<circle cx="1143" cy="1028.2" r="34.5" fill="#1d5b58" stroke="#cfd3bd" stroke-width="2"/>
<circle cx="1237" cy="1028" r="36.5" fill="#1d5b58" stroke="#f2f0e6" stroke-width="3.5"/>
<circle cx="1339.4" cy="1028" r="43.6" fill="#1d5b58" stroke="#cfd3bd" stroke-width="2"/>
<circle cx="1441" cy="1028" r="36" fill="#1d5b58" stroke="#f2f0e6" stroke-width="3.5"/>
<circle cx="1538" cy="1028.5" r="35.5" fill="#1d5b58" stroke="#cfd3bd" stroke-width="2"/>
<circle cx="1604" cy="1013" r="18.5" fill="#1d5b58" stroke="#cfd3bd" stroke-width="2"/>
<circle cx="1636.5" cy="1048" r="18.5" fill="#1d5b58" stroke="#cfd3bd" stroke-width="2"/>
<g stroke="#1a2424" stroke-width="1.5">
<rect x="1024.5" y="1010" width="48" height="37" fill="#e6ece8"/>
<rect x="1027.5" y="1013" width="42" height="31" fill="#8e9290"/>
<rect x="1030.5" y="1015" width="16" height="12" fill="#e8ecea"/>
<rect x="1055" y="1016" width="12" height="12" fill="#1e2a2a" stroke="#e8ecea"/>
<rect x="1043" y="1031" width="11" height="11" fill="#1e2a2a" stroke="#e8ecea"/>
<rect x="1030.5" y="1033" width="6" height="7" fill="#e8ecea"/>
<rect x="1060" y="1032" width="5" height="8" fill="#e8ecea"/>
</g>
<path d="M1038 1015 L1048 1031 L1061 1016" stroke="#e8ecea" stroke-width="1.2" fill="none"/>
<g stroke="#1a2424" stroke-width="1.5">
<path d="M1120 1027 L1127 1016 L1134 1027 Z" fill="#8e9290"/>
<path d="M1150 1027 L1157 1016 L1164 1027 Z" fill="#8e9290"/>
<rect x="1119" y="1027" width="44" height="3.5" fill="#8e9290"/>
<rect x="1121" y="1030" width="3" height="20" fill="#8e9290"/>
<rect x="1157" y="1030" width="3" height="20" fill="#8e9290"/>
<rect x="1125" y="1030" width="12" height="16" fill="#8e9290"/>
<path d="M1125 1036 H1137 M1125 1041 H1137" />
</g>
<path d="M1152 1030 L1164 1043" stroke="#1a2424" stroke-width="7" stroke-linecap="round"/>
<path d="M1152 1030 L1164 1043" stroke="#5a5e5e" stroke-width="4" stroke-linecap="round"/>
<circle cx="1141" cy="1018" r="15" fill="#d6dcda" stroke="#1a2424" stroke-width="1.5"/>
<circle cx="1141" cy="1018" r="12" fill="#dfe4e2" stroke="#9aa0a0" stroke-width="2.5"/>
<circle cx="1141" cy="1012" r="4" fill="#1e2a2a"/>
<path d="M1133 1030 Q1133 1018 1141 1017 Q1149 1018 1149 1030 Z" fill="#1e2a2a"/>
<g stroke="#1a1a1a" stroke-width="1.5">
<rect x="1216" y="1010" width="29" height="24" fill="#dcd6c4"/>
<rect x="1219.5" y="1013" width="22" height="17" fill="#1b8a9a"/>
<rect x="1250" y="1011" width="13" height="32" fill="#dcd6c4"/>
<path d="M1213 1038 L1248 1038 L1251 1045 L1210 1045 Z" fill="#dcd6c4"/>
</g>
<path d="M1215 1041 H1246" stroke="#333" stroke-width="1.5" stroke-dasharray="1.5 1"/>
<path d="M1254 1030 H1259" stroke="#222" stroke-width="1.5"/>
<g stroke="#1a2222" stroke-width="2">
<rect x="1352" y="995" width="8" height="18" fill="#7e8282"/>
<path d="M1317 1022 L1317 1055 L1362 1055 L1362 1022 L1339.5 1001 Z" fill="#9a9e9e"/>
<path d="M1309 1027 L1339.5 1000 L1370 1027 L1366 1031 L1339.5 1007 L1313 1031 Z" fill="#6e7272"/>
<rect x="1332" y="1027" width="15" height="28" fill="#8a8e8e"/>
</g>
<circle cx="1343" cy="1042" r="1.7" fill="#1a2222"/>
<g transform="rotate(-14 1441 1028)">
<rect x="1424" y="1006" width="33" height="44" rx="3" fill="#d8a850" stroke="#1a1a1a" stroke-width="1.6"/>
<rect x="1431" y="1013" width="18" height="9" rx="1" fill="#e6e6de" stroke="#1a1a1a" stroke-width="1"/>
<rect x="1457" y="1011" width="3.5" height="5" fill="#f0a0a0"/>
<rect x="1457" y="1018" width="3.5" height="5" fill="#f0e080"/>
<rect x="1457" y="1025" width="3.5" height="5" fill="#90d090"/>
<rect x="1457" y="1032" width="3.5" height="5" fill="#a0a0f0"/>
<path d="M1421 1012 h5 M1421 1026 h5 M1421 1040 h5" stroke="#ddd" stroke-width="2"/>
</g>
<g stroke="#d0ecdc" stroke-width="2.2" stroke-linecap="round">
<path d="M1538 1004 V1010"/><path d="M1525 1007 L1528 1012"/><path d="M1551 1007 L1548 1012"/>
<path d="M1516 1016 L1522 1018"/><path d="M1560 1016 L1554 1018"/>
<path d="M1514 1028 L1520 1027"/><path d="M1562 1028 L1556 1027"/>
</g>
<g stroke="#1a2222" stroke-width="1.5">
<path d="M1522 1052 Q1520 1036 1530 1034 L1546 1034 Q1556 1036 1554 1052 Z" fill="#9a9e9e"/>
<circle cx="1538" cy="1025" r="10" fill="#9a9e9e"/>
<path d="M1530 1030 Q1538 1026 1546 1030 Q1542 1036 1538 1035 Q1534 1036 1530 1030 Z" fill="#c8cccc"/>
</g>
<circle cx="1533.5" cy="1023" r="1.3" fill="#111"/><circle cx="1542.5" cy="1023" r="1.3" fill="#111"/>
<g transform="rotate(-8 1604 1013)">
<rect x="1591" y="1005" width="27" height="17" rx="1.5" fill="#d6dada" stroke="#1a1a1a" stroke-width="1.4"/>
<rect x="1594" y="1009" width="21" height="6" fill="#2a2e2e"/>
<circle cx="1598.5" cy="1012" r="1.8" fill="#d6dada"/><circle cx="1610.5" cy="1012" r="1.8" fill="#d6dada"/>
<path d="M1595 1022 L1597 1018 H1612 L1614 1022" fill="#8a8e8e" stroke="#1a1a1a" stroke-width="1"/>
</g>
<rect x="1633.5" y="1035.5" width="6" height="6" fill="#b8bcbc" transform="rotate(0 1636.5 1048)"/><rect x="1633.5" y="1035.5" width="6" height="6" fill="#b8bcbc" transform="rotate(45 1636.5 1048)"/><rect x="1633.5" y="1035.5" width="6" height="6" fill="#b8bcbc" transform="rotate(90 1636.5 1048)"/><rect x="1633.5" y="1035.5" width="6" height="6" fill="#b8bcbc" transform="rotate(135 1636.5 1048)"/><rect x="1633.5" y="1035.5" width="6" height="6" fill="#b8bcbc" transform="rotate(180 1636.5 1048)"/><rect x="1633.5" y="1035.5" width="6" height="6" fill="#b8bcbc" transform="rotate(225 1636.5 1048)"/><rect x="1633.5" y="1035.5" width="6" height="6" fill="#b8bcbc" transform="rotate(270 1636.5 1048)"/><rect x="1633.5" y="1035.5" width="6" height="6" fill="#b8bcbc" transform="rotate(315 1636.5 1048)"/>
<circle cx="1636.5" cy="1048" r="9" fill="#b8bcbc"/><circle cx="1636.5" cy="1048" r="4.2" fill="#1d5b58"/>
<circle cx="1781.5" cy="1006.5" r="4.5" fill="#10ee10"/>
<circle cx="1841" cy="1005.5" r="23.5" fill="url(#sph)"/>
</svg>
</body></html>
